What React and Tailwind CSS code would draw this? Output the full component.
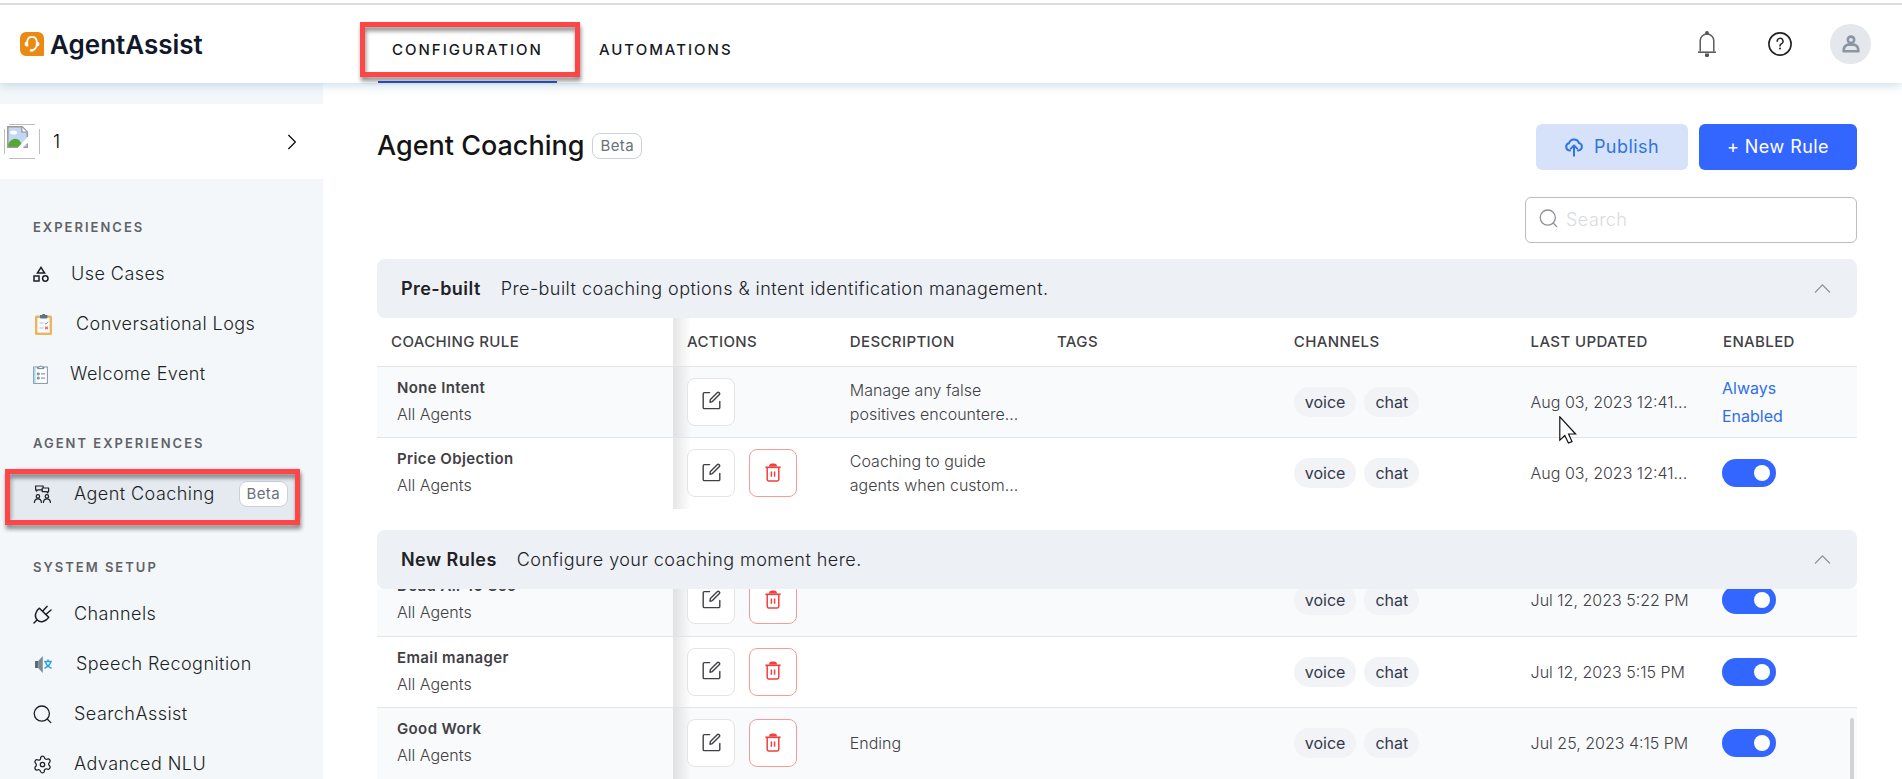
import React from "react";

const stroke = { fill: "none", stroke: "currentColor", strokeLinecap: "round", strokeLinejoin: "round" };

function LogoIcon() {
  return (
    <svg className="h-6 w-6" viewBox="0 0 24 24" aria-hidden="true">
      <path d="M6 0h12a6 6 0 0 1 6 6v17a1 1 0 0 1-1 1H6a6 6 0 0 1-6-6V6a6 6 0 0 1 6-6z" fill="#ea8a12" />
      <path d="M7.200 9.500c.4-3 2-4.600 4.800-4.600s4.400 1.600 4.800 4.600M16.600 13.800c-.6 2.400-2 4-4.400 4.400" fill="none" stroke="#fff" strokeWidth="1.700" strokeLinecap="round" />
      <path d="M8.200 9.200v5.400c-2.200 0-3.600-1-3.600-2.700s1.400-2.700 3.600-2.700zM15.800 9.200v5.400c2.200 0 3.600-1 3.600-2.700s-1.400-2.700-3.600-2.700z" fill="#fff" />
      <ellipse cx="11.8" cy="18.4" rx="2" ry="1.300" fill="#fff" />
    </svg>
  );
}

function BellIcon() {
  return (
    <svg className="h-[26px] w-5" viewBox="0 0 20 26" aria-hidden="true">
      <rect x="8.2" y="0" width="3.6" height="4" rx="1.6" fill="#555" />
      <path d="M3.2 20.6V9.8a6.8 6.8 0 0 1 13.6 0v10.8" fill="none" stroke="#5c5c5c" strokeWidth="1.5" />
      <path d="M1 21.2h18" stroke="#5c5c5c" strokeWidth="1.6" />
      <path d="M8 22.6h4v1.6a2 2 0 0 1-4 0z" fill="#555" />
    </svg>
  );
}

function HelpIcon() {
  return (
    <svg className="h-6 w-6" viewBox="0 0 24 24" aria-hidden="true">
      <circle cx="12" cy="12" r="11.1" fill="none" stroke="#222" strokeWidth="1.6" />
      <path d="M9.2 9.3a2.9 2.9 0 1 1 4.4 2.4c-1 .6-1.6 1.1-1.6 2.3" fill="none" stroke="#222" strokeWidth="1.5" strokeLinecap="round" />
      <circle cx="12" cy="16.6" r="1" fill="#222" />
    </svg>
  );
}

function UserIcon() {
  return (
    <svg className="h-[18px] w-[18px]" viewBox="0 0 18 18" aria-hidden="true">
      <g fill="none" stroke="#8b96a3" strokeWidth="2.600" strokeLinejoin="round">
        <circle cx="9" cy="4.8" r="3.2" />
        <path d="M1.600 16.200c0-4 2-6 4.600-6.600h5.600c2.600.6 4.600 2.600 4.600 6.600z" />
      </g>
    </svg>
  );
}

function BrokenImage() {
  return (
    <svg className="h-9 w-9" viewBox="0 0 36 36" role="img" aria-label="Account">
      <path d="M5 .5h26M5 34.500h26M.5 5v25M35.500 5v25" stroke="#bdbdbd" strokeWidth="1" />
      <g transform="translate(3 2)">
        <path d="M.8.8h14.400l5 5v15.400H.8z" fill="#c3d8f7" />
        <ellipse cx="6.500" cy="6.500" rx="3.500" ry="2" fill="#fff" />
        <path d="M1 21v-3c3-5 8-7 12-3l3 6z" fill="#54a933" />
        <path d="M10 22.500 21.500 10v6l-7 6.500z" fill="#fff" />
        <path d="M20.200 11V5.800l-5-5H.8v20.400H11M16.500 21.200h3.700V17.500" fill="none" stroke="#9a9a9a" strokeWidth="1.500" />
        <path d="M14.800 1v5.200h5.200" fill="#fff" stroke="#9a9a9a" strokeWidth="1.300" />
      </g>
    </svg>
  );
}

function ShapesIcon() {
  return (
    <svg className="h-4 w-4" viewBox="0 0 16 16" {...stroke} strokeLinejoin="miter" strokeWidth="1.5" aria-hidden="true">
      <path d="M8 1.400 11.600 7H4.400z" />
      <rect x="1" y="10" width="5" height="5" />
      <circle cx="12.3" cy="12.5" r="2.7" />
    </svg>
  );
}

function LogsIcon() {
  return (
    <svg className="h-[21px] w-[21px]" viewBox="0 0 21 21" aria-hidden="true">
      <rect x="2" y="1.400" width="17" height="19.600" rx="1.600" fill="#edb45c" />
      <rect x="4.400" y="4" width="12.200" height="14.600" fill="#fbfcfd" />
      <path d="M7 1h7.400v2.600a1 1 0 0 1-1 1H8a1 1 0 0 1-1-1z" fill="#5f7388" />
      <rect x="9.300" y="0" width="2.800" height="2" fill="#5f7388" />
      <path d="M6.400 9h4.200M6.400 14h4.200" stroke="#b9c2cc" strokeWidth="1" />
      <path d="m11.800 9 1.200 1.200 2.200-2.600" fill="none" stroke="#58b17d" strokeWidth="1" />
      <path d="m12.200 12.600 2.600 2.600m0-2.600-2.600 2.600" stroke="#e0566a" strokeWidth="1.100" />
    </svg>
  );
}

function WelcomeIcon() {
  return (
    <svg className="h-[19px] w-[15px]" viewBox="0 0 15 19" fill="none" aria-hidden="true">
      <rect x=".6" y="2" width="13.800" height="16.400" fill="#fdfeff" stroke="#8995a0" strokeWidth="1" />
      <path d="M1.800 2.600v15.200" stroke="#a7dcf2" strokeWidth="1.800" />
      <path d="M4.600 3.600h6.200V2.200H9.200a1.600 1.600 0 0 0-3 0H4.600z" fill="#fff" stroke="#66737e" strokeWidth=".9" />
      <path d="M4.400 8h1.800v1.800H4.400zM4.400 12.200h1.800V14H4.400zM8 8.900h4M8 13.100h4" stroke="#66737e" strokeWidth=".9" />
    </svg>
  );
}

function CoachingIcon() {
  return (
    <svg className="h-[18px] w-[19px]" viewBox="0 0 19 18" {...stroke} strokeWidth="1.200" aria-hidden="true">
      <path d="M8.600 4.800H4.800L3.400 6.200V4.800H2.600V1h7.600v1.400" />
      <path d="M9.200 3h6.400v3.600h-.8v1.400l-1.400-1.400H9.200z" />
      <circle cx="4.900" cy="11.400" r="1.700" />
      <circle cx="13.900" cy="11.400" r="1.700" />
      <path d="M1.400 17.400c.2-2.400 1.400-3.600 3.500-3.600s3.300 1.200 3.500 3.600M10.400 17.400c.2-2.400 1.400-3.600 3.500-3.600s3.300 1.200 3.500 3.600" />
    </svg>
  );
}

function PlugIcon() {
  return (
    <svg className="h-[19px] w-[19px]" viewBox="0 0 19 19" {...stroke} strokeWidth="1.500" aria-hidden="true">
      <path d="M1 18l3-3" />
      <path d="m6.400 3.200 9.400 9.200c-3.200 4.400-8.600 5.600-11.600 2.600S2 6.400 6.400 3.200z" />
      <path d="m10 5.800 4-4.400M13.400 9l4.600-4" />
    </svg>
  );
}

function SpeechIcon() {
  return (
    <svg className="h-[19px] w-[21px]" viewBox="0 0 21 19" aria-hidden="true">
      <path d="M2 6h3.200v7H2z" fill="#5d6973" />
      <path d="M5.200 6 9.800 1v17l-4.600-5z" fill="#7d8a94" />
      <path d="M11.200 6.400h7.600M15 4.400v2M12.400 6.400c.6 3.400 2.800 5.400 6.200 7M17.800 6.400c-.6 3.400-3 5.400-6.400 7" fill="none" stroke="#29a3dc" strokeWidth="1.500" />
    </svg>
  );
}

function SearchIcon({ className = "" }) {
  return (
    <svg className={`h-[19px] w-[19px] ${className}`} viewBox="0 0 19 19" {...stroke} strokeWidth="1.300" aria-hidden="true">
      <circle cx="8.800" cy="8.600" r="7.600" />
      <path d="m14.200 14 3.600 3.600" />
    </svg>
  );
}

function GearIcon() {
  return (
    <svg className="h-[19px] w-[19px]" viewBox="0 0 24 24" {...stroke} strokeWidth="1.600" aria-hidden="true">
      <path d="M9.600 3a2.600 2.600 0 0 1 4.800 0 2.600 2.600 0 0 0 3.800 2.100 2.600 2.600 0 0 1 2.600 4.300 2.600 2.600 0 0 0 0 4.200 2.600 2.600 0 0 1-2.600 4.300A2.600 2.600 0 0 0 14.400 21a2.600 2.600 0 0 1-4.800 0 2.600 2.600 0 0 0-3.800-2.100 2.600 2.600 0 0 1-2.600-4.300 2.600 2.600 0 0 0 0-4.200 2.600 2.600 0 0 1 2.600-4.300A2.600 2.600 0 0 0 9.600 3z" />
      <circle cx="12" cy="12" r="2.800" />
    </svg>
  );
}

function PublishIcon() {
  return (
    <svg className="h-5 w-[18px]" viewBox="0 0 18 20" {...stroke} strokeWidth="2" aria-hidden="true">
      <path d="M5 13.400h-.4a3.600 3.600 0 0 1-.6-7.100 5.200 5.200 0 0 1 10-.2 3.700 3.700 0 0 1-.6 7.300H13" />
      <path d="M9 18.800V8.600M5.800 11.600 9 8.400l3.200 3.200" />
    </svg>
  );
}

function EditIcon() {
  return (
    <svg className="h-[19px] w-[19px]" viewBox="0 0 19 19" {...stroke} strokeWidth="1.400" aria-hidden="true">
      <path d="M7.600 1.600H2.400a1.200 1.200 0 0 0-1.200 1.200v13.600a1.200 1.200 0 0 0 1.200 1.200h14.200a1.200 1.200 0 0 0 1.200-1.200v-6" />
      <path d="m8.400 8.400 6.800-6.600a1.400 1.400 0 0 1 2 2L10.400 10.600 8 11.200z" />
    </svg>
  );
}

function TrashIcon() {
  return (
    <svg className="h-[19px] w-4" viewBox="0 0 16 19" aria-hidden="true">
      <path d="M4 3.600a3 3 0 0 1 3-3h2a3 3 0 0 1 3 3z" fill="#f04040" />
      <path d="M.4 4.300h15.200" stroke="#f04040" strokeWidth="1.700" />
      <path d="M2.200 5v11.600a1.400 1.400 0 0 0 1.400 1.400h8.800a1.400 1.400 0 0 0 1.400-1.400V5M6.400 8.400v5.400M9.600 8.400v5.400" fill="none" stroke="#f04040" strokeWidth="1.500" />
    </svg>
  );
}

function Chevron({ className, d }) {
  return (
    <svg className={className} viewBox="0 0 16 16" {...stroke} strokeWidth="1" aria-hidden="true">
      <path d={d} />
    </svg>
  );
}

function Highlight({ className }) {
  return (
    <span
      aria-hidden="true"
      className={`pointer-events-none absolute border-[5px] border-[#ff4545] drop-shadow-[1px_4px_2px_rgba(0,0,0,0.45)] ${className}`}
    />
  );
}

function Beta({ className = "" }) {
  return (
    <span className={`rounded-lg border border-[#c9d1e0] bg-white px-[7px] text-[15px] leading-6 font-normal tracking-wide text-[#68727d] ${className}`}>
      Beta
    </span>
  );
}

const groups = [
  {
    title: "EXPERIENCES",
    items: [
      { label: "Use Cases", Icon: ShapesIcon },
      { label: "Conversational Logs", Icon: LogsIcon },
      { label: "Welcome Event", Icon: WelcomeIcon },
    ],
  },
  { title: "AGENT EXPERIENCES", items: [{ label: "Agent Coaching", Icon: CoachingIcon, active: true }] },
  {
    title: "SYSTEM SETUP",
    items: [
      { label: "Channels", Icon: PlugIcon },
      { label: "Speech Recognition", Icon: SpeechIcon },
      { label: "SearchAssist", Icon: SearchIcon },
      { label: "Advanced NLU", Icon: GearIcon },
    ],
  },
];

const prebuilt = [
  { name: "None Intent", lines: ["Manage any false", "positives encountere..."], updated: "Aug 03, 2023 12:41...", locked: true, cursor: true },
  { name: "Price Objection", lines: ["Coaching to guide", "agents when custom..."], updated: "Aug 03, 2023 12:41..." },
];

const newRules = [
  { name: "Dead Air 10 Sec", lines: [], updated: "Jul 12, 2023 5:22 PM" },
  { name: "Email manager", lines: [], updated: "Jul 12, 2023 5:15 PM" },
  { name: "Good Work", lines: ["Ending"], updated: "Jul 25, 2023 4:15 PM" },
];

const columns = ["COACHING RULE", "ACTIONS", "DESCRIPTION", "TAGS", "CHANNELS", "LAST UPDATED", "ENABLED"];
const fade = "bg-[linear-gradient(to_right,rgba(0,0,0,0.1),transparent_18px)]";

function Sidebar() {
  return (
    <aside className="w-[323px] shrink-0 overflow-hidden bg-[#f3f7fa] pt-[21px]">
      <button type="button" className="flex h-[75px] w-full items-center bg-white pl-1 text-left">
        <BrokenImage />
        <span className="ml-[13px] flex-1 text-lg font-light text-black">1</span>
        <Chevron className="mr-[22px] h-[18px] w-[18px]" d="m5 2 6 6-6 6" />
      </button>
      <nav className="mt-[38px] flex flex-col gap-9">
        {groups.map((g) => (
          <section key={g.title}>
            <h2 className="mb-[14px] pl-[33px] text-[13px] leading-5 font-semibold tracking-[2px] text-[#5f6368]">{g.title}</h2>
            <ul className="flex flex-col gap-1 px-3">
              {g.items.map(({ label, Icon, active }) => (
                <li key={label}>
                  <a
                    href="#"
                    aria-current={active ? "page" : undefined}
                    className={`relative flex items-center rounded-md pl-[21px] text-lg font-light tracking-wide text-[#1c1f24] ${
                      active ? "mr-[9px] h-[54px] bg-[#e4eaf0]" : "h-[46px]"
                    }`}
                  >
                    <Icon />
                    <span className="ml-[22px]">{label}</span>
                    {active && <Beta className="mr-[14px] ml-auto" />}
                    {active && <Highlight className="top-[2px] -left-[7px] h-14 w-[295px]" />}
                  </a>
                </li>
              ))}
            </ul>
          </section>
        ))}
      </nav>
    </aside>
  );
}

function Header() {
  return (
    <header className="relative z-10 shrink-0 bg-white pt-[3px] shadow-[0_2px_10px_rgba(120,165,200,0.4)]">
      <div className="flex h-20 items-center border-t-2 border-[#dcdcdc] pr-[31px] pl-5">
        <a href="#" className="flex w-[358px] items-center gap-[6px] text-[26px] font-semibold text-[#10182a]">
          <LogoIcon />
          AgentAssist
        </a>
        <nav className="flex h-full gap-7 text-[15px] font-medium tracking-[2px] text-[#17191c]">
          <a href="#" aria-current="page" className="relative flex items-center border-b-2 border-[#2b59dc] px-[14px] pt-[15px]">
            CONFIGURATION
            <Highlight className="top-[17px] -left-[18px] h-[55px] w-[220px]" />
          </a>
          <a href="#" className="flex items-center px-[14px] pt-[13px]">AUTOMATIONS</a>
        </nav>
        <div className="ml-auto flex items-center">
          <button type="button" aria-label="Notifications"><BellIcon /></button>
          <button type="button" aria-label="Help" className="ml-[51px]"><HelpIcon /></button>
          <button type="button" aria-label="Profile" className="ml-[38px] flex h-10 w-[41px] items-center justify-center rounded-full bg-[#e4e7ec]">
            <UserIcon />
          </button>
        </div>
      </div>
    </header>
  );
}

function Panel({ title, text, children }) {
  return (
    <section>
      <div className="flex h-[59px] items-center rounded-lg bg-[#edf0f5] pr-[25px] pl-6 text-lg tracking-wide text-[#202226]">
        <h2 className="font-semibold">{title}</h2>
        <p className="ml-5 font-light">{text}</p>
        <button type="button" aria-label={`Collapse ${title}`} className="ml-auto text-[#888]">
          <Chevron className="h-[19px] w-[19px]" d="m2 11 6-6 6 6" />
        </button>
      </div>
      {children}
    </section>
  );
}

function RuleTable({ rows, label, hideHead }) {
  return (
    <table className="w-full table-fixed text-left text-base text-[#3f4145]" aria-label={label}>
      <colgroup>
        <col className="w-[20%]" />
        <col className="w-[11%]" />
        <col className="w-[14%]" />
        <col className="w-[16%]" />
        <col className="w-[16%]" />
        <col className="w-[13%]" />
        <col className="w-[10%]" />
      </colgroup>
      {!hideHead && (
        <thead>
          <tr className="h-12 border-b border-[#e2e4e8] text-[15px]">
            {columns.map((c) => (
              <th key={c} scope="col" className={`px-[14px] font-medium tracking-wide ${c === "ACTIONS" ? fade : ""}`}>{c}</th>
            ))}
          </tr>
        </thead>
      )}
      <tbody>
        {rows.map((r) => (
          <tr key={r.name} className="h-[71px] border-b border-[#e2e4e8] odd:bg-[#f9fafc] last:h-[72px] last:border-b-0">
            <th scope="row" className="pb-[2px] pl-5 font-normal">
              <div className="text-[15px] leading-[27px] font-semibold tracking-wide">{r.name}</div>
              <div className="leading-[27px] font-light">All Agents</div>
            </th>
            <td className={`pl-[14px] ${fade}`}>
              <div className="flex gap-[14px]">
                <button type="button" aria-label={`Edit ${r.name}`} className="flex h-12 w-12 items-center justify-center rounded-lg border border-[#e3e4e8] bg-white pb-[2px]">
                  <EditIcon />
                </button>
                {!r.locked && (
                  <button type="button" aria-label={`Delete ${r.name}`} className="flex h-12 w-12 items-center justify-center rounded-lg border border-[#f99a9a] bg-white pb-[2px]">
                    <TrashIcon />
                  </button>
                )}
              </div>
            </td>
            <td className="pl-[14px] leading-6 font-light whitespace-nowrap">
              {r.lines.map((l) => <div key={l}>{l}</div>)}
            </td>
            <td />
            <td className="pl-[14px]">
              <div className="flex gap-2 font-normal text-[#33394a]">
                <span className="rounded-full bg-[#f1f3f7] px-[11px] leading-[30px]">voice</span>
                <span className="rounded-full bg-[#f1f3f7] px-[11px] leading-[30px]">chat</span>
              </div>
            </td>
            <td className="relative pl-[14px] font-light whitespace-nowrap">
              {r.updated}
              {r.cursor && (
                <svg className="absolute top-[49px] left-[42px] h-7 w-5" viewBox="0 0 20 28" aria-hidden="true">
                  <path d="M.8.8v23.400l5-4.600 3.600 7.400 3.600-1.400-3.400-7.600h7z" fill="#fff" stroke="#111" strokeWidth="1.200" />
                </svg>
              )}
            </td>
            <td className="pl-[13px]">
              {r.locked ? (
                <div className="w-16 leading-7 text-[#2f6fe8]">Always Enabled</div>
              ) : (
                <input
                  type="checkbox"
                  role="switch"
                  defaultChecked
                  aria-label={`Enable ${r.name}`}
                  className="flex h-7 w-[54px] appearance-none items-center justify-end rounded-full bg-[#3366ff] pr-[6px] before:h-4 before:w-4 before:rounded-full before:bg-white"
                />
              )}
            </td>
          </tr>
        ))}
      </tbody>
    </table>
  );
}

export default function App() {
  return (
    <div className="flex h-screen flex-col overflow-hidden bg-white font-['Inter','Liberation_Sans',sans-serif]">
      <Header />
      <div className="flex min-h-0 flex-1">
        <Sidebar />
        <main className="flex min-w-0 flex-1 flex-col pt-[41px] pr-[45px] pl-[54px]">
          <div className="flex shrink-0 items-center">
            <div className="flex items-center gap-2 pb-[2px]">
              <h1 className="text-[27px] leading-9 font-medium text-[#141414]">Agent Coaching</h1>
              <Beta />
            </div>
            <div className="ml-auto flex gap-[11px] text-lg tracking-wide">
              <button type="button" className="flex h-[46px] w-[152px] items-center justify-center gap-[11px] rounded-md bg-[#d5e2fa] text-[#2f74e4]">
                <PublishIcon />
                Publish
              </button>
              <button type="button" className="h-[46px] w-[158px] rounded-md bg-[#3366ff] text-white">+ New Rule</button>
            </div>
          </div>
          <label className="mt-[27px] flex h-[46px] w-[332px] shrink-0 items-center gap-2 self-end rounded-md border border-[#b9bcc6] px-[13px] text-[#8f9195]">
            <SearchIcon className="mb-1" />
            <input type="search" aria-label="Search" placeholder="Search" className="min-w-0 flex-1 bg-transparent text-lg font-light tracking-wide text-black outline-none placeholder:text-[#d9dbde]" />
          </label>
          <div className="mt-4 flex min-h-0 flex-1 flex-col">
            <Panel title="Pre-built" text="Pre-built coaching options & intent identification management.">
              <RuleTable rows={prebuilt} label="Pre-built rules" />
            </Panel>
            <div className="relative mt-[21px] min-h-0 flex-1 overflow-hidden">
              <Panel title="New Rules" text="Configure your coaching moment here.">
                <div className="overflow-hidden">
                  <div className="-mt-6">
                    <RuleTable rows={newRules} label="New rules" hideHead />
                  </div>
                </div>
              </Panel>
              <span className="absolute right-[3px] bottom-0 h-[61px] w-1 rounded-t-full bg-[#d2d3d5]" />
            </div>
          </div>
        </main>
      </div>
    </div>
  );
}
